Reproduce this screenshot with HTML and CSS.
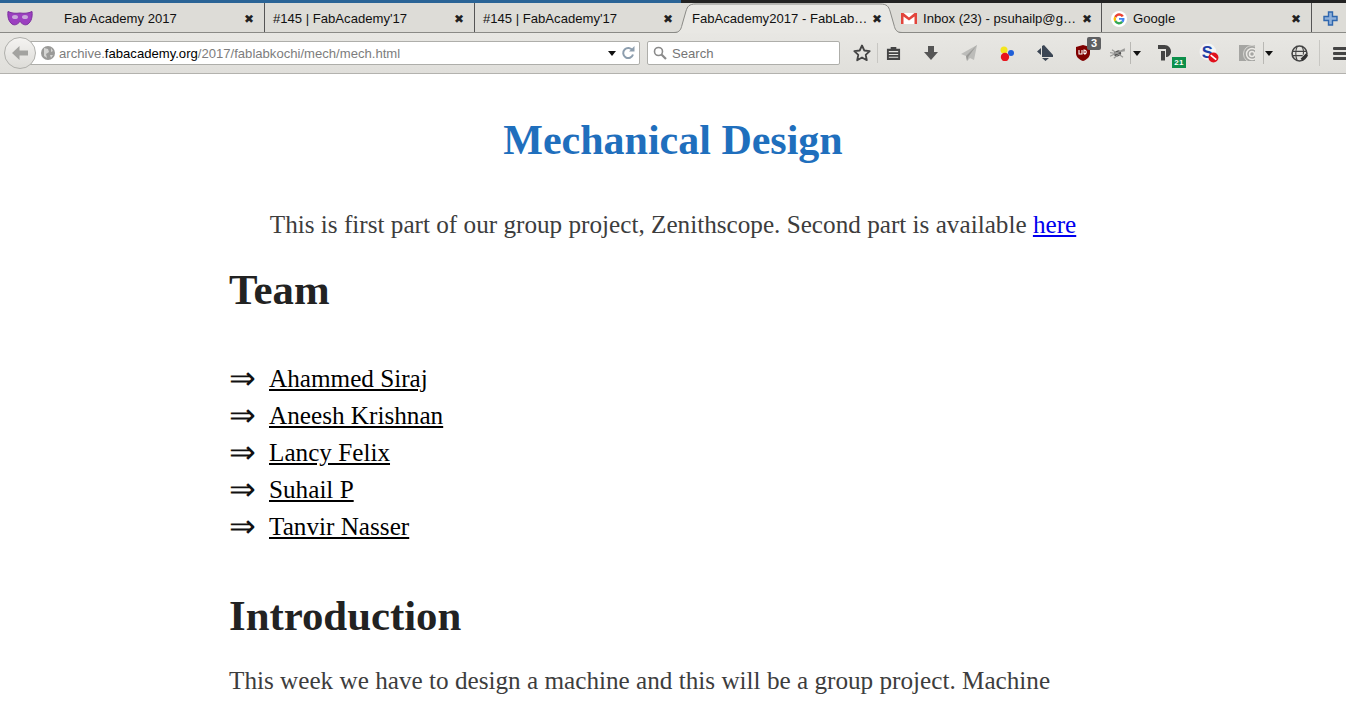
FILE: index.html
```html
<!DOCTYPE html>
<html lang="en">
<head>
<meta charset="utf-8">
<title>Mechanical Design</title>
<link rel="stylesheet" href="styles.css">
</head>
<body>
<header class="chrome">
  <div class="strip"><div class="strip-blue"></div></div>
  <div class="tabs">
    <div class="tab t1">
      <svg class="fav-mask" viewBox="0 0 26 16"><path d="M1 1.500c4 2 8 2 12 1.500 4 .5 8 .5 12-1.500.6 5-.5 10-4 12.500-3 2-6 0-8-2.500-2 2.500-5 4.500-8 2.500C1.500 11.500.4 6.500 1 1.500z" fill="#9b3fc0" stroke="#7b2e9e"/><ellipse cx="8" cy="7" rx="3" ry="2" fill="#c9a8da"/><ellipse cx="18" cy="7" rx="3" ry="2" fill="#c9a8da"/></svg>
      <span class="tab-title">Fab Academy 2017</span><span class="x">✖</span>
    </div>
    <div class="tab t2"><span class="tab-title">#145 | FabAcademy'17</span><span class="x">✖</span></div>
    <div class="tab t3"><span class="tab-title">#145 | FabAcademy'17</span><span class="x">✖</span></div>
    <div class="tab active">
      <svg class="active-shape" viewBox="0 0 228 31"><path d="M8 22L12 8C13.500 3.500 15 1 22 1H206C213 1 214.500 3.500 216 8L220 22C221 26 222 30 228 30H0C6 30 7 26 8 22z" fill="#e9e8e4"/><path d="M0 29.500C6 29.500 7 26 8 22L12 8C13.500 3.500 15 1 22 1H206C213 1 214.500 3.500 216 8L220 22C221 26 222 29.500 228 29.500" fill="none" stroke="#8a8a86"/></svg>
      <span class="tab-title">FabAcademy2017 - FabLab…</span><span class="x">✖</span>
    </div>
    <div class="tab t5">
      <svg class="fav fav-gmail" viewBox="0 1 16 12.500" preserveAspectRatio="none"><rect y="1" width="16" height="12.500" fill="#fff"/><path d="M0 1h2.500L8 6l5.500-5H16v12.500h-2.500V5L8 9.500 2.500 5v8.500H0z" fill="#e2453c"/></svg>
      <span class="tab-title">Inbox (23) - psuhailp@g…</span><span class="x">✖</span>
    </div>
    <div class="tab t6">
      <svg class="fav" viewBox="0 0 16 16"><circle cx="8" cy="8" r="8" fill="#fff"/><path d="M12.800 5A5.500 5.500 0 0 0 3.300 5.200L5.200 7A3 3 0 0 1 10.600 6z" fill="#ea4335"/><path d="M3.300 5.200a5.500 5.500 0 0 0 0 5.600L5.200 9.300a3 3 0 0 1 0-2.300z" fill="#fbbc05"/><path d="M3.300 10.800a5.500 5.500 0 0 0 8.800 .8L10.300 10a3 3 0 0 1-5.100-.7z" fill="#34a853"/><path d="M8 6.900h5.400c.3 1.800-.2 3.500-1.300 4.700L10.300 10c.4-.3.600-.7.700-1.200H8z" fill="#4285f4"/></svg>
      <span class="tab-title">Google</span><span class="x">✖</span>
    </div>
    <div class="newtab">
      <svg viewBox="0 0 15 15" width="15" height="15"><path d="M5.500 1h4v4.500H14v4H9.500V14h-4V9.500H1v-4h4.500z" fill="#8fb0da" stroke="#2f66ad" stroke-width="1.400"/></svg>
    </div>
  </div>
  <div class="navbar">
    <div class="back"><svg viewBox="0 0 16 14" width="16" height="14"><path d="M7.500 0L0 7l7.500 7V9.500H16v-5H7.500z" fill="#a3a3a0"/></svg></div>
    <div class="urlbar">
      <svg class="globe-s" viewBox="0 0 14 14"><circle cx="7" cy="7" r="7" fill="#9a9a98"/><path d="M3 2l4 1 1 3-3 2 1 4-3-2zM10 2l2 3-2 1zM9 9l3 0-2 3z" fill="#d4d4d2"/></svg>
      <span class="url"><span class="dim">archive.</span>fabacademy.org<span class="dim">/2017/fablabkochi/mech/mech.html</span></span>
      <span class="caret url-caret"></span>
      <svg class="reload" viewBox="0 0 14 14" width="14" height="14"><path d="M11.500 4.500A5 5 0 1 0 12 8.500" fill="none" stroke="#8d9eae" stroke-width="2"/><path d="M8 5.500h5.500V0z" fill="#8d9eae"/></svg>
    </div>
    <div class="searchbar">
      <svg viewBox="0 0 14 14" width="14" height="14"><circle cx="5.500" cy="5.500" r="4" fill="none" stroke="#8a8a8a" stroke-width="1.600"/><path d="M8.500 8.500L13 13" stroke="#8a8a8a" stroke-width="2.200"/></svg>
      <span>Search</span>
    </div>
    <div class="tools">
      <div class="tb w-star"><svg viewBox="0 0 18 18" width="18" height="18"><path d="M9 1.500l2.300 5 5.400.6-4 3.700 1.100 5.400L9 13.500l-4.800 2.700 1.100-5.400-4-3.700 5.400-.6z" fill="none" stroke="#444" stroke-width="1.800" stroke-linejoin="round"/></svg></div>
      <div class="sep"></div>
      <div class="tb w-clip"><svg viewBox="0 0 16 16" width="15" height="15"><path d="M1 3h4V1h6v2h4v12H1z" fill="#444"/><path d="M3 6h10M3 9h10M3 12h10" stroke="#e4e3df" stroke-width="1.200"/></svg></div>
      <div class="tb"><svg viewBox="0 0 16 16" width="16" height="16"><path d="M5 1h6v6h4l-7 8-7-8h4z" fill="#555"/></svg></div>
      <div class="tb"><svg viewBox="0 0 16 16" width="16" height="16"><path d="M16 0L0 9l5 2 1 5 3-3 4 2z" fill="#bcbcb9"/><path d="M16 0L5 11l1 5 1.500-4.500z" fill="#9a9a97"/></svg></div>
      <div class="tb"><svg viewBox="0 0 16 16" width="16" height="16"><circle cx="5" cy="5" r="3.500" fill="#f4e61e"/><circle cx="12" cy="8" r="3" fill="#1f5fd8"/><circle cx="6" cy="12" r="4.200" fill="#e8141c"/></svg></div>
      <div class="tb"><svg viewBox="0 0 16 16" width="16" height="16"><path d="M7 0l9 10v2H5V1zM4 3v7L0 6.500zM5 13h7l-3.500 3z" fill="#3b4654"/></svg></div>
      <div class="tb w-ub"><svg viewBox="0 0 14 16" width="14" height="16"><path d="M7 0l7 2v6c0 4-3 6.500-7 8-4-1.500-7-4-7-8V2z" fill="#800000"/><path d="M3 5v4h3V5M8 9V5c3 0 3 4 0 4" fill="none" stroke="#fff" stroke-width="1.100"/></svg><span class="badge-ub">3</span></div>
      <div class="tb w-bug"><svg viewBox="0 0 18 14" width="17" height="13"><ellipse cx="9" cy="7" rx="4" ry="3" fill="#555" transform="rotate(-25 9 7)"/><path d="M1 10L17 2M3 3l12 8M1 6l6 1M11 5l6-1M5 12l4-3" stroke="#9a9a98" stroke-width="1.300"/></svg></div>
      <div class="sep-sm"></div>
      <div class="w-caret"><span class="caret"></span></div>
      <div class="tb w-d"><svg viewBox="0 0 13 16" width="13" height="16"><path d="M0 0h6.500C10.500 0 13 3 13 6.500S10.500 12 8 12V4H0zM3 6h4v9.500H3z" fill="#444"/></svg><span class="badge-d">21</span></div>
      <div class="tb w-s"><svg viewBox="0 0 18 18" width="20" height="20"><circle cx="8" cy="8" r="7.500" fill="#f4f4f4"/><text class="s-letter" x="2.500" y="13.500">S</text><circle cx="13" cy="13" r="4.500" fill="#e0101c"/><path d="M10.500 11l5 4" stroke="#fff" stroke-width="1.500"/></svg></div>
      <div class="tb w-c"><svg viewBox="0 0 16 16" width="16" height="16"><rect width="16" height="16" fill="#a5a5a2"/><circle cx="13" cy="9" r="2.500" fill="none" stroke="#eceae6" stroke-width="1.500"/><circle cx="13" cy="9" r="5.500" fill="none" stroke="#eceae6" stroke-width="1.500"/><circle cx="13" cy="9" r="8.500" fill="none" stroke="#d8d7d3"/></svg></div>
      <div class="sep-sm"></div>
      <div class="w-caret2"><span class="caret"></span></div>
      <div class="tb w-g"><svg viewBox="0 0 16 16" width="17" height="17"><circle cx="8" cy="8" r="7" fill="none" stroke="#444" stroke-width="1.500"/><path d="M1 6h14M1 10h10M6 1c-2 4-2 10 0 14M10 1c2 3 2 6 1.500 8" fill="none" stroke="#444"/><path d="M9 13l5-5 2 2-5 5z" fill="#333"/></svg></div>
      <div class="sep tall"></div>
      <div class="menu"><span></span><span></span><span></span></div>
    </div>
  </div>
</header>
<main class="page">
  <h1>Mechanical Design</h1>
  <p class="lead">This is first part of our group project, Zenithscope. Second part is available <a href="#">here</a></p>
  <h2 class="team">Team</h2>
  <ul class="members">
    <li><span class="arrow">⇒</span><a href="#">Ahammed Siraj</a></li>
    <li><span class="arrow">⇒</span><a href="#">Aneesh Krishnan</a></li>
    <li><span class="arrow">⇒</span><a href="#">Lancy Felix</a></li>
    <li><span class="arrow">⇒</span><a href="#">Suhail P</a></li>
    <li><span class="arrow">⇒</span><a href="#">Tanvir Nasser</a></li>
  </ul>
  <h2 class="intro">Introduction</h2>
  <p class="body-text">This week we have to design a machine and this will be a group project. Machine</p>
</main>
</body>
</html>
```
FILE: styles.css
```css
* { box-sizing: border-box; }
html, body { margin: 0; padding: 0; height: 100%; overflow: hidden; background: #fff; }
body { font-family: "Liberation Serif", serif; }

.chrome { font-family: "Liberation Sans", Arial, sans-serif; background: #dddcd7; }
.strip { height: 3px; background: #222; }
.strip-blue { width: 681px; height: 3px; background: #2a6496; }

.tabs { display: flex; height: 30px; border-bottom: 1px solid #8a8a86; }
.tab { position: relative; display: flex; align-items: center; height: 29px; padding-top: 2px; font-size: 13.1px; color: #111; border-right: 1px solid #555; background: #dddcd7; }
.t1 { width: 265px; padding-left: 64px; }
.t2 { width: 210px; padding-left: 8px; }
.t3 { width: 208px; padding-left: 8px; border-right: 0; }
.active { width: 209px; padding-left: 9px; background: transparent; border-right: 0; z-index: 1; }
.t5 { width: 210px; padding-left: 9px; }
.t6 { width: 210px; padding-left: 9px; }
.tab-title { flex: 1; white-space: nowrap; position: relative; }
.x { width: 12px; margin-right: 9px; font-size: 12px; color: #222; position: relative; text-align: center; line-height: 12px; }
.t5 .x { margin-right: 8px; }
.fav-mask { position: absolute; left: 7px; top: 7px; width: 26px; height: 16px; }
.fav { width: 16px; height: 16px; margin-right: 6px; flex: none; }
.fav-gmail { height: 11px; }
.active-shape { position: absolute; left: -9px; top: 0; width: 228px; height: 31px; }
.newtab { flex: 1; display: flex; align-items: center; justify-content: center; padding-left: 2px; padding-top: 1px; }

.navbar { display: flex; align-items: center; height: 41px; padding-left: 4px; border-bottom: 1px solid #b3b2ae; background: linear-gradient(#e8e7e3, #e0dfdb); }
.back { width: 32px; height: 32px; border-radius: 50%; background: linear-gradient(#f4f3f1, #dddcd8); border: 1px solid #b0b0ac; display: flex; align-items: center; justify-content: center; flex: none; position: relative; z-index: 1; }
.urlbar { width: 619px; height: 24px; margin-left: -15px; padding-left: 19px; padding-right: 4px; background: #fff; border: 1px solid #aeaeaa; border-radius: 2px; display: flex; align-items: center; font-size: 13.1px; flex: none; }
.globe-s { width: 14px; height: 14px; flex: none; margin-right: 4px; }
.url { flex: 1; color: #000; white-space: nowrap; }
.dim { color: #7d7d7d; }
.caret { display: inline-block; width: 0; height: 0; border-left: 4.500px solid transparent; border-right: 4.500px solid transparent; border-top: 5px solid #111; }
.url-caret { margin-right: 5px; }
.reload { flex: none; }
.searchbar { width: 193px; height: 24px; margin-left: 7px; padding-left: 5px; background: #fff; border: 1px solid #aeaeaa; border-radius: 2px; display: flex; align-items: center; gap: 5px; font-size: 13.1px; color: #757575; flex: none; }

.tools { display: flex; align-items: center; height: 100%; margin-left: 7px; }
.tb { position: relative; width: 38px; display: flex; align-items: center; justify-content: center; flex: none; }
.w-star { width: 30px; }
.sep { width: 1px; height: 20px; background: #c8c7c3; flex: none; }
.sep.tall { height: 26px; }
.w-clip { width: 31px; margin-right: 3px; }
.w-bug { width: 28px; padding-left: 3px; }
.sep-sm { width: 1px; height: 22px; background: #b9b8b4; flex: none; }
.w-caret { width: 10px; display: flex; justify-content: flex-end; flex: none; }
.w-caret2 { width: 9px; display: flex; justify-content: flex-end; flex: none; }
.w-d { width: 46px; }
.w-s { width: 44px; }
.w-c { width: 32px; }
.w-g { width: 46px; padding-left: 6px; }
.badge-ub { position: absolute; left: 23px; top: -8px; width: 14px; background: #5f6062; color: #fff; font-size: 11px; font-weight: bold; border-radius: 2px; line-height: 13px; text-align: center; }
.badge-d { position: absolute; left: 31px; top: 12px; background: #0c8f4a; color: #fff; font-size: 8px; font-weight: bold; width: 14px; height: 11px; line-height: 11px; text-align: center; letter-spacing: .3px; }
.s-letter { font-family: "Liberation Sans", sans-serif; font-size: 15px; font-weight: bold; fill: #1f3fa8; }
.menu { margin-left: 13px; width: 20px; display: flex; flex-direction: column; gap: 2px; flex: none; }
.menu span { display: block; height: 3px; background: #444; border-radius: 1px; }

.page { width: 888px; margin: 0 auto; color: #3d3d3d; }
h1 { margin: 44px 0 0; text-align: center; font-size: 42px; line-height: 44px; font-weight: bold; color: #1f6fbd; }
.lead { margin: 44px 0 0; text-align: center; font-size: 25.200px; line-height: 37px; }
.lead a { color: #0000ee; }
h2 { margin: 0; font-size: 42.800px; line-height: 44px; font-weight: bold; color: #222; }
.team { margin-top: 25px; }
.members { list-style: none; margin: 48px 0 0; padding: 0; font-size: 25.200px; line-height: 37px; color: #111; }
.members li { display: flex; }
.arrow { width: 40px; flex: none; font-size: 32px; }
.members a { color: #000; }
.intro { margin-top: 49px; }
.body-text { margin: 24px 0 0; font-size: 25.200px; line-height: 37px; }
```
